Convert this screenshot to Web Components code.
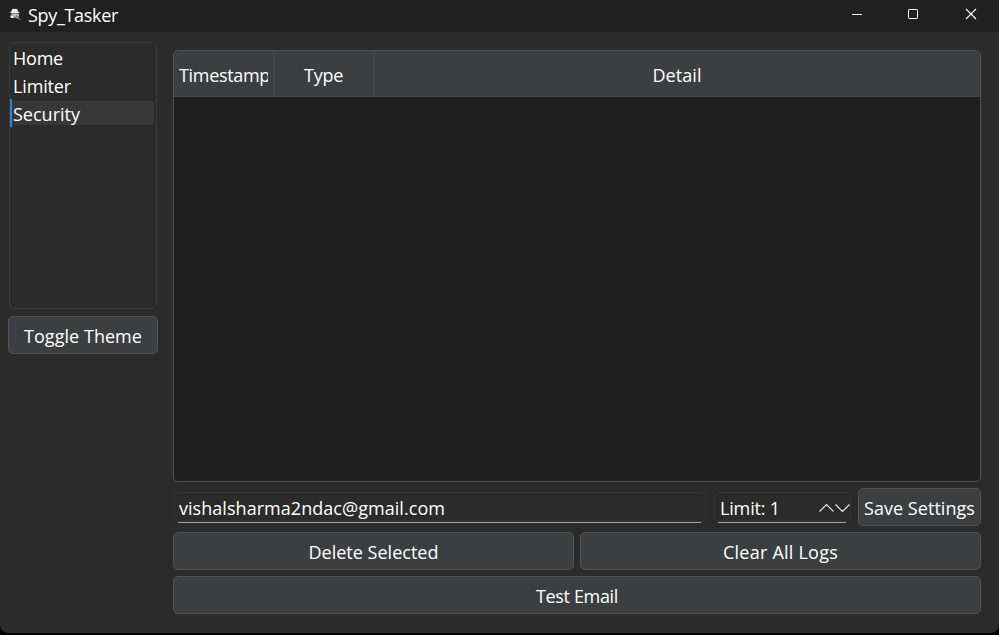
<!DOCTYPE html>
<html lang="en">
<head>
<meta charset="utf-8">
<title>Spy_Tasker</title>
<style>
html,body{margin:0;height:100%;background:#000;overflow:hidden}
body{font-family:"Open Sans","Noto Sans",sans-serif;font-size:18px;color:#fff}
</style>
</head>
<body>
<spy-window></spy-window>
<script>
function define(name, html, ready) {
  const template = document.createElement('template');
  template.innerHTML = html;
  customElements.define(name, class extends HTMLElement {
    constructor() {
      super();
      this.attachShadow({mode: 'open'}).append(template.content.cloneNode(true));
    }
    connectedCallback() { if (ready) ready(this); }
  });
}

/* A single-line label whose tracking is adjusted to span a given width. */
define('ui-label', `
<style>
:host{display:block;line-height:24px;flex:none}
span{display:inline-block;white-space:pre;vertical-align:top}
</style><span><slot></slot></span>`, el => {
  const want = parseFloat(el.getAttribute('span'));
  if (!want) return;
  const span = el.shadowRoot.querySelector('span');
  const n = el.textContent.length;
  const gap = (want - span.getBoundingClientRect().width) / n;
  span.style.letterSpacing = gap.toFixed(3) + 'px';
});

define('ui-button', `
<style>
:host{display:flex;align-items:center;justify-content:center;box-sizing:border-box;height:38px;
background:#3c3f41;border:1px solid #535353;border-radius:5px;padding-top:2px}
</style><slot></slot>`);

define('nav-item', `
<style>
:host{display:flex;align-items:center;height:28px;box-sizing:border-box;padding:2px 2px 0 0}
div{display:flex;align-items:center;box-sizing:border-box;width:100%;height:24px;padding-left:3px;border-radius:3px}
:host([selected]){padding:1px 2px 1px 0;border-left:2px solid #2f84cb}
:host([selected]) div{padding-left:1px;padding-top:2px;background:#373737}
</style><div><slot></slot></div>`);

define('nav-list', `
<style>
:host{display:block;box-sizing:border-box;width:148px;height:267px;margin-left:1px;border:1px solid #393939;border-radius:5px}
</style><slot></slot>`);

define('line-field', `
<style>
:host{display:flex;align-items:center;box-sizing:border-box;height:30px;border:1px solid #363636;border-radius:5px;position:relative;padding:2px 4px 0}
:host::after{content:"";position:absolute;left:3px;right:4px;bottom:-2px;height:1px;background:#a0a0a0}
</style><slot></slot>`);

define('spin-arrows', `
<style>:host{display:block;width:32px;height:10px}svg{display:block}</style>
<svg width="32" height="10" fill="none" stroke="#eee" stroke-width="1.15"><path d="M.5 8.500 7.500 1.500l7 7M16.500 1.500l7 7 7-7"/></svg>`);

define('log-table', `
<style>
:host{display:flex;flex-direction:column;box-sizing:border-box;height:432px;background:#1e1e1e;border:1px solid #535353;border-radius:5px;overflow:hidden}
header{display:grid;grid-template-columns:101px 100px 1fr;height:46px;box-sizing:border-box;background:#3c3f41;border-bottom:1px solid #484848}
div{display:flex;align-items:center;justify-content:center;padding:3px 1px 0 0;box-sizing:border-box;min-width:0;overflow:hidden}
div:not(:last-child){border-right:2px solid #454545}
.first{justify-content:flex-start;padding-left:5px}
.clip{display:block;overflow:hidden;width:89px;height:24px}
</style>
<header><div class="first"><span class="clip"><ui-label span="91">Timestamp</ui-label></span></div><div><ui-label span="39">Type</ui-label></div><div><ui-label span="49">Detail</ui-label></div></header>`);

define('title-bar', `
<style>
:host{display:flex;align-items:center;height:32px;box-sizing:border-box;background:#202020;padding:0 22px 0 9px}
.logo{margin:-4px 7px 0 0;flex:none}
ui-label{margin:-2px auto 0 0}
.controls{margin-top:-4px;flex:none}
</style>
<svg class="logo" width="12" height="13" viewBox="0 0 12 13">
<path fill="#eee" d="M3 1.200Q4.200.5 5.500 1.100 7.500.5 8.300 1.200L9 3.500 11 4.200Q9 5.600 6 5.600T.5 4.200L2.400 3.500Z"/>
<path fill="#bbb" d="M2 5.800h8v2.500H6L5.500 9Q2.500 9 2 5.800Z"/>
<path fill="#eee" d="M1 7.500 3.500 8 5.600 10H2Z"/>
<circle cx="7.700" cy="8.300" r="1.600" fill="#777" stroke="#ddd" stroke-width=".7"/>
<path stroke="#ddd" d="m9 9.700 2 2"/></svg>
<ui-label span="90">Spy_Tasker</ui-label>
<svg class="controls" width="125" height="12" fill="none" stroke="#fff">
<path d="M0 6.500h10"/><rect x="56.500" y="1.500" width="9" height="9" rx=".7"/><path stroke-width="1.100" d="m114 1 10 10m0-10-10 10"/></svg>`);

define('spy-window', `
<style>
:host{display:block;width:999px;height:633px;background:#2b2b2b;border-radius:0 0 8px 8px;overflow:hidden}
main{display:grid;grid-template-columns:150px 808px;column-gap:15px;padding-left:8px}
aside{display:flex;flex-direction:column;gap:7px;padding-top:10px}
section{display:flex;flex-direction:column;gap:6px;padding-top:18px}
.settings{display:flex;align-items:center;height:38px}
.email{width:532px;margin:0 8px 0 1px}
.limit{width:137px;margin-right:7px;padding-left:5px;padding-right:0}
.limit spin-arrows{margin:0 -1px 0 auto}
.save{width:123px}
.pair{display:grid;grid-template-columns:1fr 1fr;gap:6px}
</style>
<title-bar></title-bar>
<main>
<aside>
<nav-list>
<nav-item><ui-label span="50">Home</ui-label></nav-item>
<nav-item><ui-label span="58">Limiter</ui-label></nav-item>
<nav-item selected><ui-label span="67">Security</ui-label></nav-item>
</nav-list>
<ui-button><ui-label span="118">Toggle Theme</ui-label></ui-button>
</aside>
<section>
<log-table></log-table>
<div class="settings">
<line-field class="email"><ui-label span="266">vishalsharma2ndac@gmail.com</ui-label></line-field>
<line-field class="limit"><ui-label span="60">Limit: 1</ui-label><spin-arrows></spin-arrows></line-field>
<ui-button class="save"><ui-label span="111">Save Settings</ui-label></ui-button>
</div>
<div class="pair"><ui-button><ui-label span="130">Delete Selected</ui-label></ui-button><ui-button><ui-label span="115">Clear All Logs</ui-label></ui-button></div>
<ui-button><ui-label span="82">Test Email</ui-label></ui-button>
</section>
</main>`);
</script>
</body>
</html>
